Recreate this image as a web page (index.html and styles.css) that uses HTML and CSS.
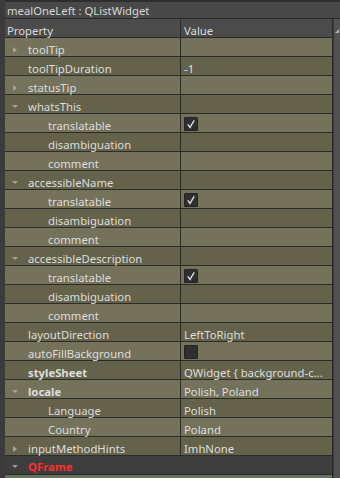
FILE: index.html
```html
<!DOCTYPE html>
<html lang="en">
<head>
    <meta charset="UTF-8">
    <title>Property Editor</title>
    <link rel="stylesheet" href="styles.css">
</head>
<body>
    <div class="title">mealOneLeft : QListWidget</div>

    <div class="editor">
        <div class="tree">
            <div class="row head">
                <div class="name">Property</div>
                <div class="value">Value</div>
            </div>

            <div class="row"><div class="name"><span class="branch"><i class="closed"></i></span>toolTip</div><div class="value"></div></div>
            <div class="row"><div class="name"><span class="branch"></span>toolTipDuration</div><div class="value">-1</div></div>
            <div class="row"><div class="name"><span class="branch"><i class="closed"></i></span>statusTip</div><div class="value"></div></div>
            <div class="row"><div class="name"><span class="branch"><i class="open"></i></span>whatsThis</div><div class="value"></div></div>
            <div class="row"><div class="name child"><span class="branch"></span>translatable</div><div class="value"><span class="check on"><svg width="14" height="14" viewBox="0 0 14 14"><path d="M3.8 7.4 L6 10.4 L10.2 3.4" fill="none" stroke="#dadada" stroke-width="1.4"/></svg></span></div></div>
            <div class="row"><div class="name child"><span class="branch"></span>disambiguation</div><div class="value"></div></div>
            <div class="row"><div class="name child"><span class="branch"></span>comment</div><div class="value"></div></div>
            <div class="row"><div class="name"><span class="branch"><i class="open"></i></span>accessibleName</div><div class="value"></div></div>
            <div class="row"><div class="name child"><span class="branch"></span>translatable</div><div class="value"><span class="check on"><svg width="14" height="14" viewBox="0 0 14 14"><path d="M3.8 7.4 L6 10.4 L10.2 3.4" fill="none" stroke="#dadada" stroke-width="1.4"/></svg></span></div></div>
            <div class="row"><div class="name child"><span class="branch"></span>disambiguation</div><div class="value"></div></div>
            <div class="row"><div class="name child"><span class="branch"></span>comment</div><div class="value"></div></div>
            <div class="row"><div class="name"><span class="branch"><i class="open"></i></span>accessibleDescription</div><div class="value"></div></div>
            <div class="row"><div class="name child"><span class="branch"></span>translatable</div><div class="value"><span class="check on"><svg width="14" height="14" viewBox="0 0 14 14"><path d="M3.8 7.4 L6 10.4 L10.2 3.4" fill="none" stroke="#dadada" stroke-width="1.4"/></svg></span></div></div>
            <div class="row"><div class="name child"><span class="branch"></span>disambiguation</div><div class="value"></div></div>
            <div class="row"><div class="name child"><span class="branch"></span>comment</div><div class="value"></div></div>
            <div class="row"><div class="name"><span class="branch"></span>layoutDirection</div><div class="value">LeftToRight</div></div>
            <div class="row"><div class="name"><span class="branch"></span>autoFillBackground</div><div class="value"><span class="check"></span></div></div>
            <div class="row"><div class="name bold"><span class="branch"></span>styleSheet</div><div class="value">QWidget { background-c...</div></div>
            <div class="row"><div class="name bold"><span class="branch"><i class="open"></i></span>locale</div><div class="value">Polish, Poland</div></div>
            <div class="row"><div class="name child"><span class="branch"></span>Language</div><div class="value">Polish</div></div>
            <div class="row"><div class="name child"><span class="branch"></span>Country</div><div class="value">Poland</div></div>
            <div class="row"><div class="name"><span class="branch"><i class="closed"></i></span>inputMethodHints</div><div class="value">ImhNone</div></div>

            <!-- next class group -->
            <div class="group"><span class="branch"><i class="open"></i></span>QFrame</div>
            <div class="row next"></div>
        </div>

        <div class="scrollbar"><span class="up"></span></div>
    </div>
</body>
</html>
```

FILE: styles.css
```css
body {
    margin: 0;
    padding-left: 5px;
    background: #3b3b3b;
    font-family: "Noto Sans", sans-serif;
    font-size: 11.3px;
    color: #dcdcdc;
    height: 478px;
    overflow: hidden;
}
.title {
    height: 16px;
    line-height: 16px;
    padding: 1px 0 0 2px;
    box-sizing: border-box;
    height: 19px;
    background: #484848;
    border-top: 2px solid #2e2e2e;
    border-bottom: 1px solid #2a2a2a;
    color: #d6d6d6;
}
.editor {
    display: flex;
}
.tree {
    width: 328px;
    border-right: 1px solid #2a2a2a;
}
.row {
    display: grid;
    grid-template-columns: 176px 1fr;
    height: 19px;
    box-sizing: border-box;
    border-bottom: 1px solid #2c2c29;
    background: #64624a;
}
.row:nth-child(even) {
    background: #74725a;
}
.row.head {
    background: #4b4b4b;
    border-bottom-color: #2a2a2a;
}
.row.head .name {
    padding-left: 2px;
}
.name {
    display: flex;
    align-items: center;
    padding: 4px 0 0 8px;
    border-right: 1px solid #2c2c29;
    white-space: nowrap;
}
.name.child {
    padding-left: 28px;
}
.name.bold {
    font-weight: bold;
}
.value {
    padding: 4px 0 0 3px;
    display: flex;
    align-items: center;
    white-space: nowrap;
    overflow: hidden;
}
.value .check {
    margin-top: -4px;
}
.branch {
    width: 15px;
    flex-shrink: 0;
    display: flex;
    align-items: center;
}
.closed {
    width: 0;
    height: 0;
    border-left: 4px solid #a4a49a;
    border-top: 3.5px solid transparent;
    border-bottom: 3.5px solid transparent;
}
.open {
    width: 0;
    height: 0;
    margin-left: -1px;
    border-top: 3px solid #a4a49a;
    border-left: 3px solid transparent;
    border-right: 3px solid transparent;
}
.check {
    display: block;
    width: 14px;
    height: 14px;
    box-sizing: border-box;
    background: #2f2f2f;
    border: 1px solid #232323;
    border-radius: 1px;
}
.check svg {
    display: block;
    margin: -1px;
}
.group {
    display: flex;
    align-items: center;
    height: 19px;
    box-sizing: border-box;
    padding: 3px 0 0 8px;
    background: #3e3e3e;
    border-bottom: 1px solid #2c2c2c;
    color: #ff2b2b;
    font-weight: bold;
}
.group .open {
    border-top-color: #9a9a9a;
}
.row.next {
    background: #67745c;
}
.scrollbar {
    width: 6px;
    background: #525252;
    border-left: 1px solid #3a3a3a;
}
.up {
    display: block;
    margin: 10px 0 0 1px;
    width: 0;
    height: 0;
    border-bottom: 4px solid #b0b0b0;
    border-left: 4px solid transparent;
}
```
